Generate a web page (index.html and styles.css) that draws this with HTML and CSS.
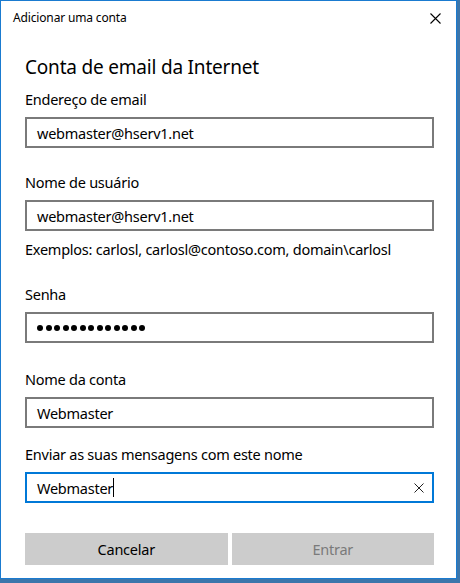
FILE: index.html
```html
<!DOCTYPE html>
<html lang="pt">
<head>
<meta charset="utf-8">
<title>Adicionar uma conta</title>
<link rel="stylesheet" href="styles.css">
</head>
<body>
<div class="window">
  <div class="titlebar">
    <span class="title">Adicionar uma conta</span>
    <svg class="close" width="11" height="11" viewBox="0 0 11 11"><path d="M0.5 0.5 L10.5 10.5 M10.5 0.5 L0.5 10.5" stroke="#000" stroke-width="1.1" fill="none"/></svg>
  </div>
  <div class="content">
    <h1 class="heading">Conta de email da Internet</h1>
    <div class="field f1">
      <div class="label">Endereço de email</div>
      <div class="input">webmaster@hserv1.net</div>
    </div>
    <div class="field f2">
      <div class="label">Nome de usuário</div>
      <div class="input">webmaster@hserv1.net</div>
    </div>
    <div class="hint">Exemplos: carlosl, carlosl@contoso.com, domain\carlosl</div>
    <div class="field f3">
      <div class="label">Senha</div>
      <div class="input password">
        <span class="dot"></span><span class="dot"></span><span class="dot"></span><span class="dot"></span><span class="dot"></span><span class="dot"></span><span class="dot"></span><span class="dot"></span><span class="dot"></span><span class="dot"></span><span class="dot"></span><span class="dot"></span><span class="dot"></span>
      </div>
    </div>
    <div class="field f4">
      <div class="label">Nome da conta</div>
      <div class="input">Webmaster</div>
    </div>
    <div class="field f5">
      <div class="label">Enviar as suas mensagens com este nome</div>
      <div class="input focused">
        <span class="value">Webmaster</span><span class="caret"></span>
        <svg class="clear" width="10" height="10" viewBox="0 0 10 10"><path d="M0.5 0.5 L9.5 9.5 M9.5 0.5 L0.5 9.5" stroke="#222" stroke-width="1" fill="none"/></svg>
      </div>
    </div>
    <div class="buttons">
      <div class="btn">Cancelar</div>
      <div class="btn disabled">Entrar</div>
    </div>
  </div>
</div>
</body>
</html>
```
FILE: styles.css
```css
html, body {
  margin: 0;
  padding: 0;
}
body {
  width: 460px;
  height: 583px;
  background: #3c76ab;
  font-family: "Noto Sans", "Open Sans", sans-serif;
  color: #000;
  overflow: hidden;
}
.window {
  box-sizing: border-box;
  width: 457px;
  height: 579px;
  background: #fff;
  border: 1px solid #1a7bd0;
}
.titlebar {
  height: 35px;
  display: flex;
  align-items: center;
  justify-content: space-between;
  padding: 0 15px 0 12px;
}
.title {
  font-size: 12px;
  line-height: 16px;
  margin-top: -1px;
  letter-spacing: -0.15px;
}
.close {
  display: block;
}
.content {
  padding: 0 22px 0 24px;
  display: flex;
  flex-direction: column;
}
.heading {
  margin: 17px 0 0 0;
  font-size: 19px;
  font-weight: normal;
  line-height: 28px;
  height: 28px;
  letter-spacing: -0.2px;
}
.field {
  display: flex;
  flex-direction: column;
}
.label {
  font-size: 14.5px;
  line-height: 20px;
  height: 20px;
  margin-bottom: 8px;
  letter-spacing: -0.25px;
}
.f1 { margin-top: 8px; }
.f2 { margin-top: 24px; }
.hint {
  margin-top: 8px;
  font-size: 14.5px;
  line-height: 20px;
  height: 20px;
  letter-spacing: -0.25px;
}
.f3 { margin-top: 25px; }
.f4 { margin-top: 26px; }
.f5 { margin-top: 16px; }
.input {
  box-sizing: border-box;
  height: 31px;
  border: 2px solid #7a7a7a;
  padding: 0 10px;
  display: flex;
  align-items: center;
  font-size: 14.5px;
  letter-spacing: -0.25px;
}
.input.focused {
  border-color: #0078d7;
}
.value {
  line-height: 20px;
}
.caret {
  width: 1px;
  height: 19px;
  background: #000;
}
.clear {
  margin-left: auto;
  margin-right: -2px;
}
.password {
  gap: 2.5px;
}
.dot {
  width: 6px;
  height: 6px;
  border-radius: 50%;
  background: #000;
}
.buttons {
  margin-top: 30px;
  display: flex;
  gap: 4px;
}
.btn {
  flex: 1;
  height: 32px;
  background: #cccccc;
  display: flex;
  align-items: center;
  justify-content: center;
  font-size: 14.5px;
  letter-spacing: -0.25px;
}
.btn.disabled {
  color: #7a7a7a;
}
```
